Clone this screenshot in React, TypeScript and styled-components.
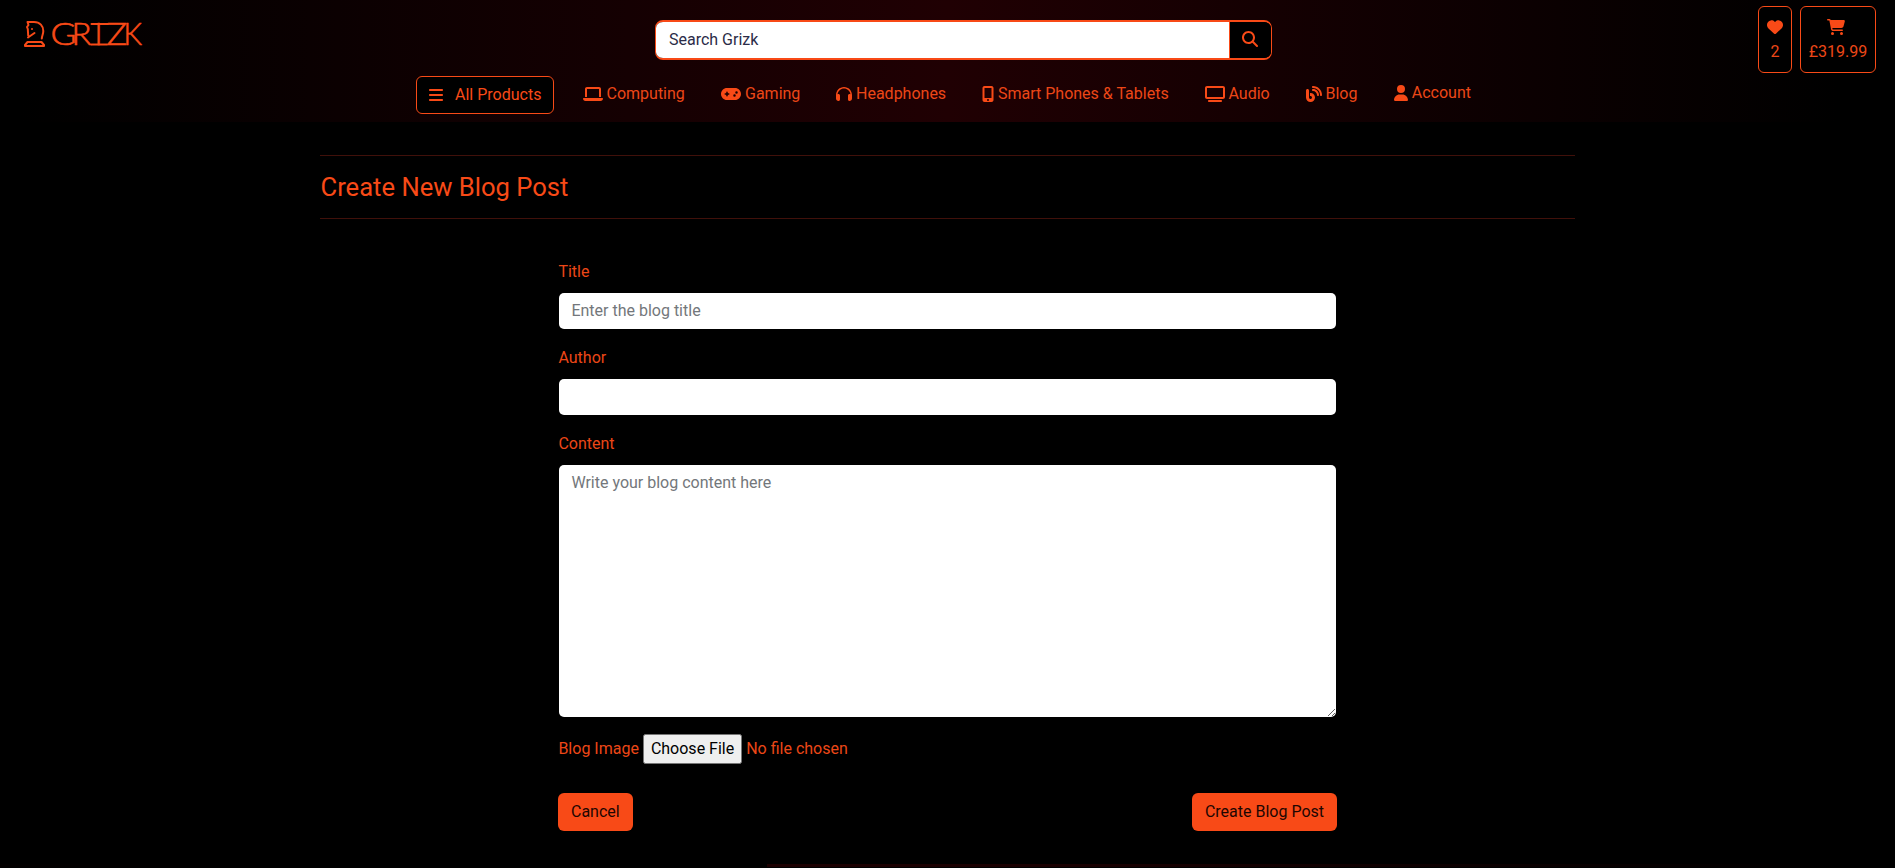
import React from "react";
import styled, { createGlobalStyle } from "styled-components";
import {
  FaBars, FaGamepad, FaHeadphones, FaBlog, FaHeart, FaUser,
  FaMagnifyingGlass, FaCartShopping, FaLaptop, FaMobileScreenButton, FaTv,
} from "react-icons/fa6";

const accent = "#f84a17";

const Global = createGlobalStyle`
  *, *::before, *::after { box-sizing: border-box; }
  html, body { margin: 0; background: #000; overflow: hidden; }
  body, input, textarea, button { font-family: Roboto, "Liberation Sans", sans-serif; font-size: 16px; line-height: 24px; font-weight: 400; }
  body { color: ${accent}; }
`;

const Page = styled.div`
  height: 868px;
  overflow: hidden;
  display: flex;
  flex-direction: column;
`;

const Header = styled.header`
  height: 122px;
  flex: none;
  background: linear-gradient(to right, #000 1%, #200003 50%, #000 97%);
`;

const TopRow = styled.div`
  height: 74px;
  display: grid;
  grid-template-columns: 632px 617px 1fr;
  padding: 0 19px 0 23px;
`;

const LogoLink = styled.a`
  padding-top: 9px;
`;

const SearchBox = styled.div`
  margin-top: 20px;
  height: 40px;
  display: flex;
  background: #000;
  border: 2px solid ${accent};
  border-left-width: 1px;
  border-right-width: 1px;
  border-radius: 8px;
  overflow: hidden;
`;

const SearchInput = styled.input`
  flex: 1;
  min-width: 0;
  border: 0;
  border-right: 1px solid ${accent};
  padding: 0 13px;
  background: #fff;
  &::placeholder { color: #2b2c48; opacity: 1; }
`;

const SearchButton = styled.button`
  width: 41px;
  padding: 0 1px 2px 0;
  border: 0;
  background: #000;
  color: ${accent};
  display: grid;
  place-items: center;
`;

const Counters = styled.div`
  display: flex;
  justify-content: flex-end;
  gap: 8px;
  padding-top: 6px;
`;

const Counter = styled.a<{ $width: number; $shift?: number }>`
  width: ${(p) => p.$width}px;
  height: 67px;
  border: 1px solid ${accent};
  border-radius: 6px;
  background: #000;
  display: flex;
  flex-direction: column;
  align-items: center;
  padding-top: 12px;
  svg { margin: 0 ${(p) => p.$shift ?? 0}px 5px 0; }
`;

const Text = styled.span`
  color: #ec4717;
`;

const Nav = styled.nav`
  display: flex;
  padding-left: 416px;
`;

const AllProducts = styled.button`
  width: 138px;
  height: 38px;
  margin: 2px 28.5px 0 0;
  padding: 0 11px;
  display: flex;
  align-items: center;
  gap: 11px;
  color: ${accent};
  background: #000;
  border: 1px solid ${accent};
  border-radius: 6px;
  white-space: nowrap;
  svg { flex: none; }
`;

const NavItem = styled.a<{ $width: number; $up?: boolean }>`
  width: ${(p) => p.$width}px;
  height: 24px;
  margin-top: ${(p) => (p.$up ? 7 : 8)}px;
  display: flex;
  align-items: center;
  gap: 4px;
  white-space: nowrap;
`;

const Main = styled.main`
  width: 1255px;
  margin-left: 320px;
  padding-top: 33px;
  flex: 1;
`;

const Heading = styled.h1`
  height: 64px;
  margin: 0;
  padding: 15px 0 0 0.5px;
  border: 1px solid #40100a;
  border-width: 1px 0;
  font-size: 25.6px;
  line-height: 32px;
  font-weight: 400;
`;

const Form = styled.form`
  width: 779px;
  margin: 41px 0 0 238px;
`;

const Field = styled.div`
  padding: 0 1px;
  display: flex;
  flex-direction: column;
  margin-bottom: 17px;
`;

const Label = styled.label`
  margin: 0 0 9px -0.6px;
  color: #ec4717;
`;

const fieldLook = `
  width: 100%;
  border: 0;
  border-radius: 5px;
  background: #fff;
  display: block;
  &::placeholder { color: #73777b; opacity: 1; }
`;

const TextInput = styled.input`
  ${fieldLook}
  height: 36px;
  padding: 0 12.4px 1px;
`;

const TextArea = styled.textarea`
  ${fieldLook}
  height: 252px;
  padding: 6px 12.4px;
  resize: vertical;
`;

const FileRow = styled.div`
  display: flex;
  align-items: center;
  gap: 4px;
  height: 30px;
  padding-left: 0.4px;
  color: #ec4717;
`;

const FileInput = styled.input`
  color: inherit;
  &::file-selector-button {
    font: inherit;
    height: 30px;
    padding: 0 6px 2px;
    margin-right: 4px;
  }
`;

const Actions = styled.div`
  display: flex;
  justify-content: space-between;
  margin-top: 29px;
`;

const Button = styled.button`
  height: 38px;
  padding: 0 13px;
  border: 0;
  border-radius: 6px;
  background: ${accent};
  color: #1c0602;
`;

const FooterEdge = styled.footer`
  height: 4px;
  flex: none;
  border-bottom: 1px solid #000;
  background: linear-gradient(to right, #030000 0, #000 14%, #000 40.5%, #1c0001 40.5%, #1a0001 55%, #000 97%);
`;

const LogoMark = () => (
  <svg width="130" height="50" viewBox="23 9 130 50" fill="none" stroke={accent} strokeWidth="2" strokeLinecap="round" strokeLinejoin="round">
    <path d="M28 37.500L34.500 33M28.200 35.500L27.800 29L27 27L28.500 25L27.500 22H34C40 22 43.300 26 43.300 31C43.300 34 42 35.500 41.800 38.500" />
    <path d="M27.500 42H41.500L44 45V46H25V45Z" />
    <circle cx="32" cy="29" r="1" fill={accent} stroke="none" />
    <g fill={accent} strokeWidth="0.600" fontFamily="Lato" fontWeight="300" fontSize="31">
      <text x="50.500" y="45.300" textLength="26" lengthAdjust="spacingAndGlyphs">G</text>
      <text x="71.500" y="45.300" textLength="20" lengthAdjust="spacingAndGlyphs">R</text>
      <text x="98.500" y="45.300" textAnchor="middle">I</text>
      <text x="106.300" y="45.300" textLength="21" lengthAdjust="spacingAndGlyphs">Z</text>
      <text x="123.500" y="45.300" textLength="18.500" lengthAdjust="spacingAndGlyphs">K</text>
    </g>
    <path d="M91.500 24H108M91.500 44.500H107" />
  </svg>
);

const links = [
  { label: "Computing", Icon: FaLaptop, w: 20, h: 16, width: 138.5 },
  { label: "Gaming", Icon: FaGamepad, w: 20, h: 16, width: 115 },
  { label: "Headphones", Icon: FaHeadphones, w: 16, h: 16, width: 146 },
  { label: "Smart Phones & Tablets", Icon: FaMobileScreenButton, w: 12, h: 16, width: 222.5 },
  { label: "Audio", Icon: FaTv, w: 20, h: 16, width: 101 },
  { label: "Blog", Icon: FaBlog, w: 16, h: 16, width: 88.3 },
  { label: "Account", Icon: FaUser, w: 14, h: 16, width: 90, up: true },
];

export default function App() {
  return (
    <Page>
      <Global />
      <Header>
        <TopRow>
          <LogoLink><LogoMark /></LogoLink>
          <SearchBox>
            <SearchInput placeholder="Search Grizk" />
            <SearchButton><FaMagnifyingGlass size={16} /></SearchButton>
          </SearchBox>
          <Counters>
            <Counter $width={34}><FaHeart size={16} /><Text>2</Text></Counter>
            <Counter $width={76} $shift={4}><FaCartShopping style={{ width: 18, height: 16 }} /><Text>£319.99</Text></Counter>
          </Counters>
        </TopRow>
        <Nav>
          <AllProducts type="button"><FaBars size={16} />All Products</AllProducts>
          {links.map(({ label, Icon, w, h, width, up }) => (
            <NavItem key={label} $width={width} $up={up}>
              <Icon style={{ width: w, height: h }} />
              <Text>{label}</Text>
            </NavItem>
          ))}
        </Nav>
      </Header>
      <Main>
        <Heading>Create New Blog Post</Heading>
        <Form>
          <Field><Label>Title</Label><TextInput placeholder="Enter the blog title" /></Field>
          <Field><Label>Author</Label><TextInput /></Field>
          <Field><Label>Content</Label><TextArea placeholder="Write your blog content here" /></Field>
          <FileRow><label>Blog Image</label><FileInput type="file" /></FileRow>
          <Actions>
            <Button type="button">Cancel</Button>
            <Button type="button">Create Blog Post</Button>
          </Actions>
        </Form>
      </Main>
      <FooterEdge />
    </Page>
  );
}
